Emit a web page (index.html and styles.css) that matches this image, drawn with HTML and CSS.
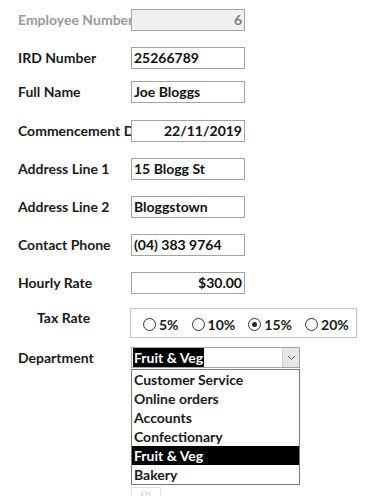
FILE: index.html
```html
<!DOCTYPE html>
<html lang="en">
<head>
  <meta charset="UTF-8">
  <title>Employee Details</title>
  <link rel="stylesheet" href="styles.css">
</head>
<body>
  <div class="form">
    <div class="row row-first">
      <label class="label label-disabled">Employee Number</label>
      <div class="field field-disabled align-right">6</div>
    </div>
    <div class="row row-short">
      <label class="label">IRD Number</label>
      <div class="field">25266789</div>
    </div>
    <div class="row row-tall">
      <label class="label">Full Name</label>
      <div class="field">Joe Bloggs</div>
    </div>
    <div class="row">
      <label class="label">Commencement Date</label>
      <div class="field align-right">22/11/2019</div>
    </div>
    <div class="row">
      <label class="label">Address Line 1</label>
      <div class="field">15 Blogg St</div>
    </div>
    <div class="row">
      <label class="label">Address Line 2</label>
      <div class="field">Bloggstown</div>
    </div>
    <div class="row">
      <label class="label">Contact Phone</label>
      <div class="field">(04) 383 9764</div>
    </div>
    <div class="row row-hourly">
      <label class="label">Hourly Rate</label>
      <div class="field align-right">$30.00</div>
    </div>
    <div class="row row-tax">
      <label class="label label-indent">Tax Rate</label>
      <div class="option-group">
        <span class="option"><span class="radio"></span>5%</span>
        <span class="option"><span class="radio"></span>10%</span>
        <span class="option"><span class="radio checked"></span>15%</span>
        <span class="option"><span class="radio"></span>20%</span>
      </div>
    </div>
    <div class="row row-dept">
      <label class="label">Department</label>
      <div class="combo-wrap">
        <div class="combo">
          <span class="combo-value"><span class="selected-text">Fruit &amp; Veg</span></span>
          <span class="combo-button">
            <svg width="9" height="6" viewBox="0 0 9 6"><path d="M1 1 L4.5 4.5 L8 1" fill="none" stroke="#666" stroke-width="1"/></svg>
          </span>
        </div>
        <ul class="dropdown">
          <li>Customer Service</li>
          <li>Online orders</li>
          <li>Accounts</li>
          <li>Confectionary</li>
          <li class="active">Fruit &amp; Veg</li>
          <li>Bakery</li>
        </ul>
        <div class="hidden-button">(?)</div>
      </div>
    </div>
  </div>
</body>
</html>
```

FILE: styles.css
```css
body {
  margin: 0;
  background: #fff;
  font-family: Lato, "Open Sans", sans-serif;
  font-weight: bold;
  font-size: 14px;
  color: #1a1a1a;
  overflow: hidden;
}
.form {
  padding-left: 18px;
}
.row {
  display: flex;
  align-items: center;
  height: 38px;
}
.row-first {
  margin-top: 9px;
  height: 38px;
}
.row-short {
  height: 34px;
}
.row-tall {
  height: 39px;
}
.row-hourly {
  height: 36px;
}
.row-tax {
  height: 39px;
  align-items: flex-start;
}
.row-dept {
  align-items: flex-start;
  height: auto;
}
.label {
  width: 113px;
  flex-shrink: 0;
  white-space: nowrap;
  overflow: hidden;
  height: 22px;
  line-height: 21px;
  align-self: flex-start;
}
.label-disabled {
  color: #9a9a9a;
}
.label-indent {
  padding-left: 19px;
  width: 94px;
  line-height: 20px;
}
.field {
  width: 108px;
  height: 20px;
  line-height: 20px;
  border: 1px solid #a3a3a3;
  padding: 0 2px;
  align-self: flex-start;
  white-space: nowrap;
  color: #111;
}
.field-disabled {
  background: #f0f0f0;
  color: #7a7a7a;
}
.align-right {
  text-align: right;
}
.option-group {
  width: 227px;
  height: 30px;
  border: 1px solid #c4c4c4;
  margin-left: -1px;
  display: flex;
  align-items: center;
  padding: 3px 0 0 12px;
  box-sizing: border-box;
  gap: 13px;
}
.option {
  display: flex;
  align-items: center;
  gap: 3px;
}
.radio {
  width: 11px;
  height: 11px;
  border: 1px solid #333;
  border-radius: 50%;
  display: inline-flex;
  align-items: center;
  justify-content: center;
}
.radio.checked::after {
  content: "";
  width: 5px;
  height: 5px;
  border-radius: 50%;
  background: #222;
}
.combo-wrap {
  width: 169px;
}
.combo {
  display: flex;
  border: 1px solid #a3a3a3;
  box-sizing: border-box;
  height: 21px;
}
.combo-value {
  flex: 1;
  padding-left: 1px;
  line-height: 19px;
}
.selected-text {
  background: #000;
  color: #fff;
  padding: 0 1px;
  display: inline-block;
  line-height: 19px;
}
.combo-button {
  width: 16px;
  background: #e6e6e6;
  border-left: 1px solid #d0d0d0;
  display: flex;
  align-items: center;
  justify-content: center;
}
.dropdown {
  list-style: none;
  margin: 1px 0 0;
  padding: 0;
  border: 1px solid #7a7a7a;
  width: 167px;
}
.dropdown li {
  height: 19px;
  line-height: 19px;
  padding-left: 2px;
}
.dropdown li.active {
  background: #000;
  color: #fff;
}
.hidden-button {
  margin-top: 2px;
  width: 28px;
  height: 14px;
  border: 1px solid #e2e2e2;
  color: #d0d0d0;
  font-size: 10px;
  text-align: center;
  line-height: 14px;
}
```
